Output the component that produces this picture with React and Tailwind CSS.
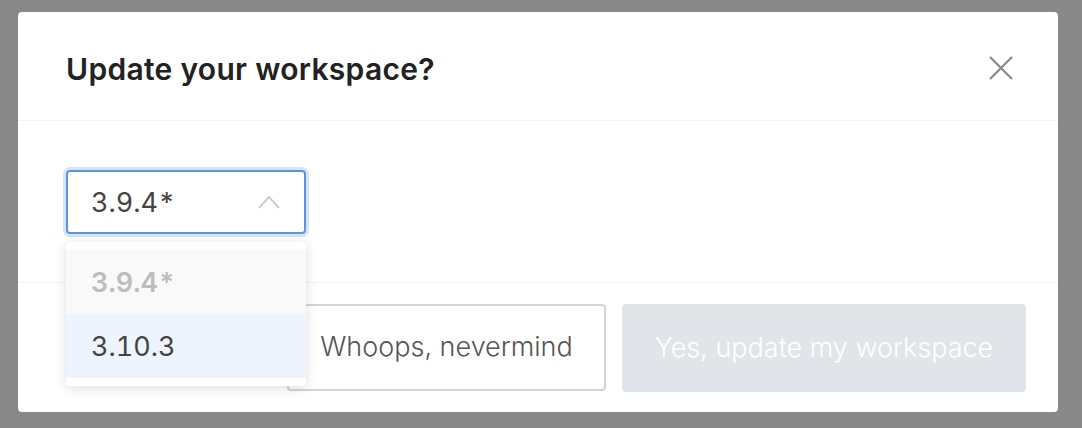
import React from "react";

export default function App() {
  return (
    <div
      className="w-[1082px] h-[428px] bg-[#888888] overflow-hidden pt-[12px] pl-[18px]"
      style={{ fontFamily: "Inter, 'Helvetica Neue', Arial, sans-serif" }}
    >
      <div className="w-[1040px] h-[400px] bg-white rounded-[4px] flex flex-col">
        {/* Header */}
        <div className="h-[109px] border-b border-[#f2f2f2] flex items-center justify-between pl-[48px] pr-[44px]">
          <h2 className="text-[30px] font-semibold text-[#222] tracking-[0.3px] leading-none mt-[6px]">
            Update your workspace?
          </h2>
          <svg width="26" height="26" viewBox="0 0 26 26" className="mt-[4px]">
            <path d="M2 2 L24 24 M24 2 L2 24" stroke="#8a8a8a" strokeWidth="2.2" fill="none" />
          </svg>
        </div>

        {/* Body */}
        <div className="h-[162px] border-b border-[#f2f2f2] pl-[48px] pt-[49px]">
          <div className="relative w-[240px]">
            <div className="h-[64px] rounded-[4px] border-2 border-[#5e92e8] ring-[3px] ring-[#d6e4f8] flex items-center justify-between pl-[23px] pr-[24px]">
              <span className="text-[27px] text-[#444] leading-none tabular-nums">3.9.4*</span>
              <svg width="22" height="14" viewBox="0 0 22 14">
                <path d="M1 13 L11 2 L21 13" stroke="#c4c4c4" strokeWidth="1.8" fill="none" />
              </svg>
            </div>
            <div className="absolute left-0 top-[72px] w-[240px] bg-white rounded-[4px] py-[8px] shadow-[0_2px_12px_rgba(0,0,0,0.14)] z-10">
              <div className="h-[64px] bg-[#f9f9f9] flex items-center pl-[25px]">
                <span className="text-[27px] font-semibold text-[#bdbdbd] leading-none tabular-nums">3.9.4*</span>
              </div>
              <div className="h-[64px] bg-[#edf4fd] flex items-center pl-[25px]">
                <span className="text-[27px] text-[#444] leading-none tabular-nums">3.10.3</span>
              </div>
            </div>
          </div>
        </div>

        {/* Footer */}
        <div className="flex-1 flex justify-end items-start pt-[21px] pr-[32px] gap-[16px]">
          <button className="w-[319px] h-[87px] rounded-[4px] border-2 border-[#d4d4d4] bg-white text-[27px] font-light text-[#555]">
            Whoops, nevermind
          </button>
          <button className="w-[404px] h-[88px] rounded-[4px] bg-[#e1e4e8] text-[27px] font-light text-white">
            Yes, update my workspace
          </button>
        </div>
      </div>
    </div>
  );
}
